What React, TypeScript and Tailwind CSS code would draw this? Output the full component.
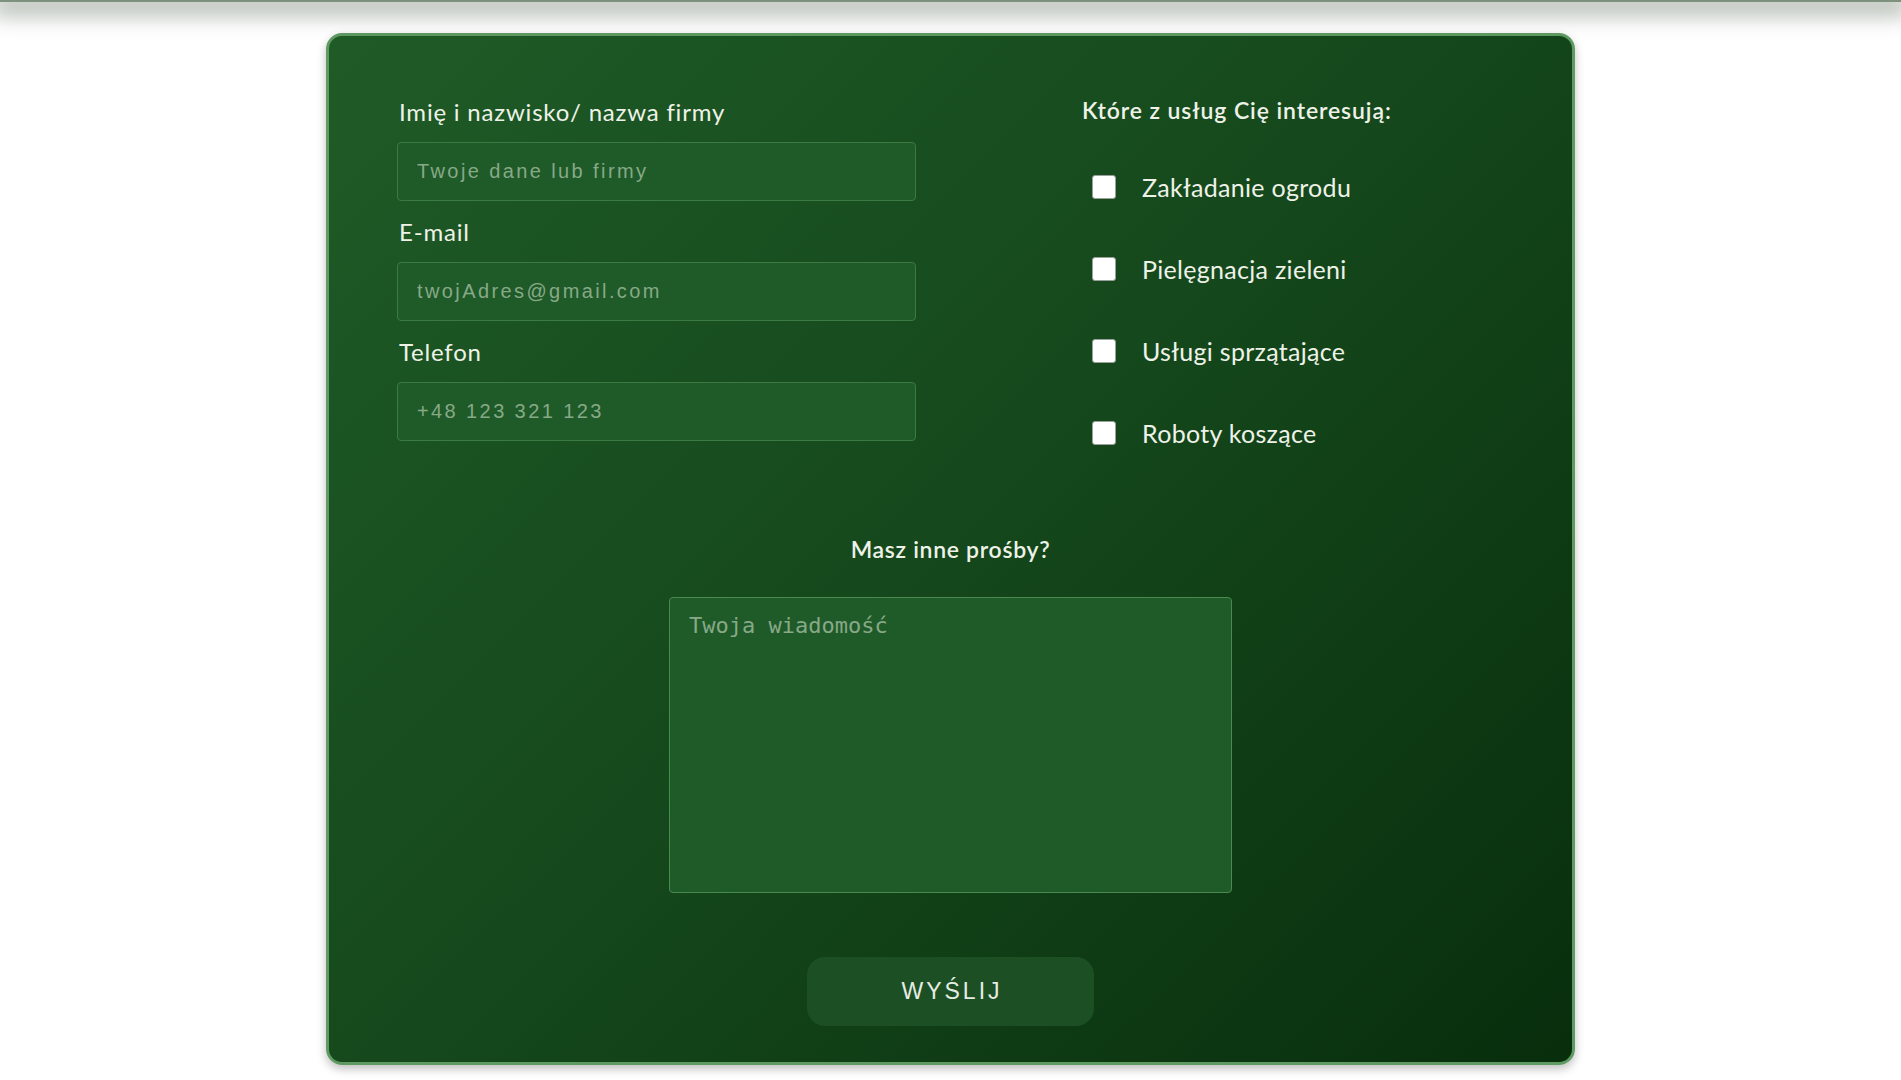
const services = [
  "Zakładanie ogrodu",
  "Pielęgnacja zieleni",
  "Usługi sprzątające",
  "Roboty koszące",
];

const fields = [
  { label: "Imię i nazwisko/ nazwa firmy", placeholder: "Twoje dane lub firmy", type: "text" },
  { label: "E-mail", placeholder: "twojAdres@gmail.com", type: "email" },
  { label: "Telefon", placeholder: "+48 123 321 123", type: "tel" },
];

export default function App() {
  return (
    <div className="min-h-[1080px] bg-white font-['Lato',sans-serif]">
      <div className="relative z-10 h-[2px] bg-[#7c927c] shadow-[0_4px_22px_8px_rgba(60,80,60,0.45)]" />

      <main className="pt-[31px]">
        <form className="mx-auto flex w-[1249px] flex-col rounded-[16px] border-[3px] border-[#5e9a62] bg-[linear-gradient(135deg,#1f5b27_0%,#164a1d_45%,#082e0c_100%)] pb-[36px] shadow-[0_4px_10px_rgba(0,0,0,0.25)]">
          <div className="flex pl-[68px] pt-[60px]">
            <div className="flex w-[519px] flex-col gap-[15px]">
              {fields.map((field) => (
                <label key={field.label} className="flex flex-col">
                  <span className="pl-[2px] text-[24px] leading-[32px] tracking-[0.8px] text-[#eef2e8]">
                    {field.label}
                  </span>
                  <input
                    type={field.type}
                    placeholder={field.placeholder}
                    className="mt-[14px] h-[59px] rounded-[4px] border border-[#3b7a43] bg-[#1f5a29] px-[19px] font-['Liberation_Sans',sans-serif] text-[20px] tracking-[2.4px] text-[#eef2e8] outline-none placeholder:text-[#87a987]"
                  />
                </label>
              ))}
            </div>

            <div className="ml-[166px] flex flex-col">
              <h3 className="-mt-[2px] text-[23px] font-semibold leading-[32px] tracking-[0.9px] text-[#eef2e8]">
                Które z usług Cię interesują:
              </h3>
              <div className="mt-[45px] flex flex-col gap-[50px] pl-[10px]">
                {services.map((service) => (
                  <label key={service} className="flex h-[32px] items-center gap-[26px]">
                    <input
                      type="checkbox"
                      className="h-[24px] w-[24px] appearance-none rounded-[3px] border border-[#9aa09a] bg-white checked:bg-[#3b7a43]"
                    />
                    <span className="text-[25px] leading-[32px] tracking-[0.3px] text-[#eef2e8]">
                      {service}
                    </span>
                  </label>
                ))}
              </div>
            </div>
          </div>

          <h3 className="mt-[84px] text-center text-[23px] font-semibold leading-[32px] tracking-[0.7px] text-[#eef2e8]">
            Masz inne prośby?
          </h3>

          <textarea
            placeholder="Twoja wiadomość"
            className="mx-auto mt-[32px] h-[296px] w-[563px] resize-none rounded-[4px] border border-[#4a8a4f] bg-[#1f5a29] px-[19px] pt-[11px] font-['DejaVu_Sans_Mono',monospace] text-[22px] text-[#eef2e8] outline-none placeholder:text-[#87a987]"
          />

          <button
            type="button"
            className="mx-auto mt-[64px] h-[69px] w-[287px] rounded-[18px] bg-[#1c5024] pl-[3px] font-['Liberation_Sans',sans-serif] text-[23px] tracking-[3px] text-[#e6ece4]"
          >
            WYŚLIJ
          </button>
        </form>
      </main>
    </div>
  );
}
